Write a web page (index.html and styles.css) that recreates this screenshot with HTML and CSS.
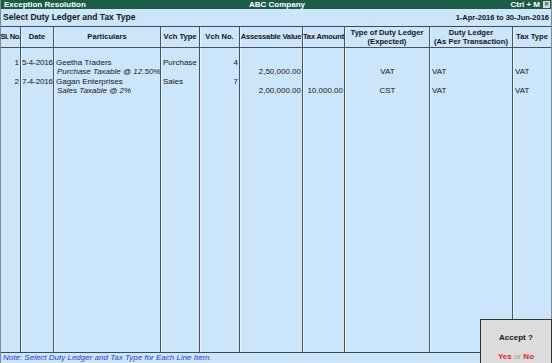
FILE: index.html
```html
<!DOCTYPE html>
<html>
<head>
<meta charset="utf-8">
<link rel="stylesheet" href="styles.css">
</head>
<body>
<div class="window">
  <div class="titlebar">
    <span class="t-left">Exception Resolution</span>
    <span class="t-center">ABC Company</span>
    <span class="t-right">Ctrl + M <span class="xbox">✕</span></span>
  </div>
  <div class="subbar">
    <span class="sub-title">Select Duty Ledger and Tax Type</span>
    <span class="period">1-Apr-2016 to 30-Jun-2016</span>
  </div>
  <div class="grid">
    <div class="col w1">
      <div class="hd tight">Sl. No.</div>
      <div class="bd"><div class="ln r">1</div><div class="ln"></div><div class="ln r">2</div><div class="ln"></div></div>
    </div>
    <div class="col w2">
      <div class="hd">Date</div>
      <div class="bd"><div class="ln date">5-4-2016</div><div class="ln"></div><div class="ln date">7-4-2016</div><div class="ln"></div></div>
    </div>
    <div class="col w3">
      <div class="hd">Particulars</div>
      <div class="bd"><div class="ln">Geetha Traders</div><div class="ln it">Purchase Taxable @ 12.50%</div><div class="ln">Gagan Enterprises</div><div class="ln it">Sales Taxable @ 2%</div></div>
    </div>
    <div class="col w4">
      <div class="hd">Vch Type</div>
      <div class="bd"><div class="ln">Purchase</div><div class="ln"></div><div class="ln">Sales</div><div class="ln"></div></div>
    </div>
    <div class="col w5">
      <div class="hd">Vch No.</div>
      <div class="bd"><div class="ln r">4</div><div class="ln"></div><div class="ln r">7</div><div class="ln"></div></div>
    </div>
    <div class="col w6">
      <div class="hd squeeze">Assessable Value</div>
      <div class="bd"><div class="ln"></div><div class="ln r">2,50,000.00</div><div class="ln"></div><div class="ln r">2,00,000.00</div></div>
    </div>
    <div class="col w7">
      <div class="hd squeeze">Tax Amount</div>
      <div class="bd"><div class="ln"></div><div class="ln"></div><div class="ln"></div><div class="ln r">10,000.00</div></div>
    </div>
    <div class="col w8">
      <div class="hd">Type of Duty Ledger<br>(Expected)</div>
      <div class="bd"><div class="ln"></div><div class="ln c">VAT</div><div class="ln"></div><div class="ln c">CST</div></div>
    </div>
    <div class="col w9">
      <div class="hd">Duty Ledger<br>(As Per Transaction)</div>
      <div class="bd"><div class="ln"></div><div class="ln">VAT</div><div class="ln"></div><div class="ln">VAT</div></div>
    </div>
    <div class="col w10 last">
      <div class="hd">Tax Type</div>
      <div class="bd"><div class="ln"></div><div class="ln">VAT</div><div class="ln"></div><div class="ln">VAT</div></div>
    </div>
  </div>
  <div class="note">Note: Select Duty Ledger and Tax Type for Each Line Item.</div>
  <div class="accept">
    <div class="accept-q">Accept ?</div>
    <div class="accept-a"><span class="yn">Yes</span> <span class="or">or</span> <span class="yn">No</span></div>
  </div>
</div>
</body>
</html>
```
FILE: styles.css
```css
html, body {
  margin: 0;
  padding: 0;
}
body {
  width: 552px;
  height: 363px;
  overflow: hidden;
  font-family: "Liberation Sans", Arial, sans-serif;
  font-size: 8px;
  color: #151515;
  background: #cbe5fa;
}
.window {
  position: relative;
  width: 552px;
  height: 363px;
  display: flex;
  flex-direction: column;
  box-sizing: border-box;
  border-left: 1px solid #7f8a92;
  border-right: 1px solid #7f8a92;
  background: #cbe5fa;
}
.titlebar {
  height: 9px;
  flex: none;
  background: #1c5b46;
  color: #ffffff;
  font-weight: bold;
  line-height: 9px;
  display: grid;
  grid-template-columns: 1fr auto 1fr;
  padding: 0 1px 0 3px;
}
.t-center { text-align: center; }
.t-right {
  display: flex;
  justify-content: flex-end;
  align-items: center;
  gap: 3px;
}
.xbox {
  display: inline-block;
  width: 7px;
  height: 7px;
  background: #d7d7d7;
  color: #1c5b46;
  font-size: 6px;
  line-height: 7px;
  text-align: center;
}
.subbar {
  height: 17px;
  flex: none;
  display: flex;
  justify-content: space-between;
  align-items: center;
  padding: 0 2px 1px 2px;
  font-weight: bold;
  box-sizing: border-box;
}
.sub-title { font-size: 8.5px; }
.period { font-size: 7.5px; }
.grid {
  flex: 1;
  display: flex;
  border-top: 1px solid #3d4a55;
  border-bottom: 1px solid #3d4a55;
}
.col {
  display: flex;
  flex-direction: column;
  flex: none;
  box-sizing: border-box;
  border-right: 1px solid #46535e;
  box-shadow: inset 1px 0 0 #e8f3fd;
}
.col.w1 { box-shadow: none; }
.col.last { border-right: none; }
.w1 { width: 20px; }
.w2 { width: 33px; }
.w3 { width: 107px; }
.w4 { width: 39px; }
.w5 { width: 40px; }
.w6 { width: 63px; }
.w7 { width: 42px; }
.w8 { width: 85px; }
.w9 { width: 83px; }
.w10 { width: 38px; }
.hd {
  height: 19px;
  flex: none;
  border-bottom: 1px solid #46535e;
  display: flex;
  align-items: center;
  justify-content: center;
  text-align: center;
  font-weight: bold;
  font-size: 7.6px;
  line-height: 8.5px;
  white-space: nowrap;
  padding-top: 1px;
  box-sizing: content-box;
}
.hd.tight { letter-spacing: -0.5px; }
.hd.squeeze { letter-spacing: -0.2px; }
.bd {
  padding-top: 9.5px;
  display: flex;
  flex-direction: column;
}
.ln {
  height: 9.5px;
  line-height: 9.5px;
  white-space: nowrap;
  padding: 0 1px 0 2px;
}
.r { text-align: right; }
.c { text-align: center; }
.it { font-style: italic; padding-left: 3px; }
.date { padding-left: 1px; letter-spacing: -0.15px; }
.note {
  height: 10px;
  flex: none;
  font-style: italic;
  color: #2b3ad0;
  line-height: 10px;
  padding-left: 2px;
}
.accept {
  position: absolute;
  right: -1px;
  bottom: 0;
  width: 70px;
  height: 43px;
  background: #dcdcdc;
  border: 1px solid #333;
  border-bottom: none;
  display: flex;
  flex-direction: column;
  align-items: center;
  text-align: center;
}
.accept-q {
  font-weight: bold;
  margin-top: 13px;
}
.accept-a {
  margin-top: 10px;
  font-weight: bold;
}
.yn { color: #e0262c; }
.or { color: #9a9a9a; font-weight: normal; }
```
